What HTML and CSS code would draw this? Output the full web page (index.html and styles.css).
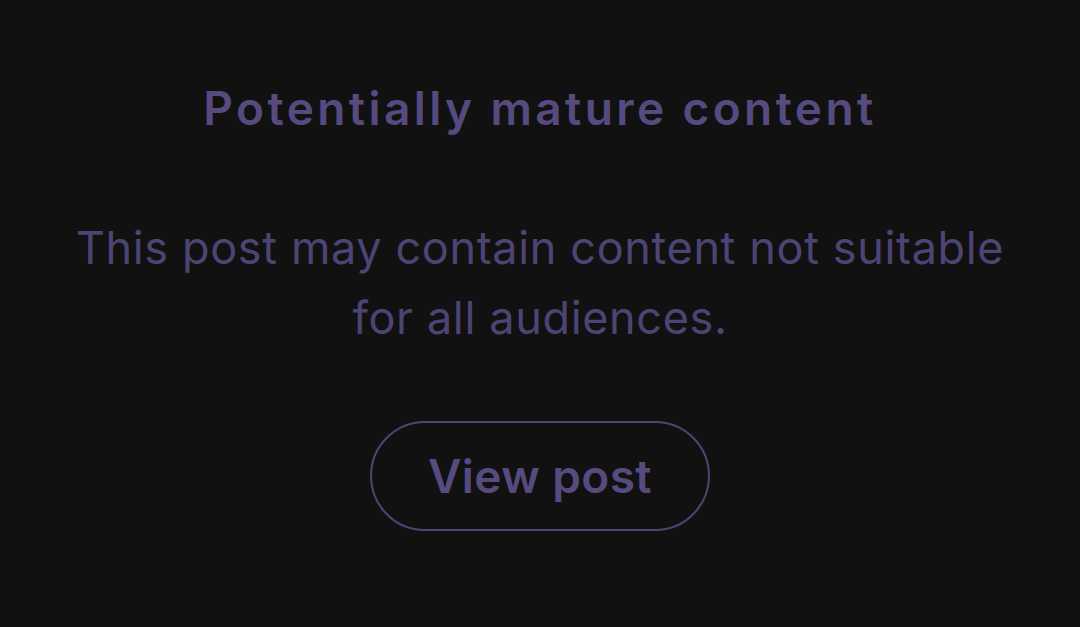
FILE: index.html
```html
<!DOCTYPE html>
<html lang="en">
  <head>
    <meta charset="UTF-8" />
    <meta name="viewport" content="width=device-width, initial-scale=1.0" />
    <title>Potentially mature content</title>
    <link rel="stylesheet" href="styles.css">
  </head>
  <body>
    <div class="notice">
      <h1 class="notice-title">Potentially mature content</h1>
      <p class="notice-text">This post may contain content not suitable for all audiences.</p>
      <button class="view-button">View post</button>
    </div>
  </body>
</html>
```

FILE: styles.css
```css
body {
  margin: 0;
  background-color: #121112;
  font-family: "Inter", "Noto Sans", sans-serif;
  color: #53487a;
}

.notice {
  display: flex;
  flex-direction: column;
  align-items: center;
  padding: 78px 40px 0;
  text-align: center;
}

.notice-title {
  margin: 0;
  font-size: 46px;
  font-weight: 600;
  line-height: 60px;
  letter-spacing: 3.4px;
  color: #574a7f;
}

.notice-text {
  margin: 75px 0 0;
  max-width: 950px;
  font-size: 45px;
  font-weight: 400;
  line-height: 70px;
  letter-spacing: 0.65px;
  color: #4e4474;
}

.view-button {
  margin-top: 68px;
  width: 340px;
  height: 110px;
  border: 2px solid #4e4474;
  border-radius: 55px;
  background: transparent;
  font-family: inherit;
  font-size: 46px;
  font-weight: 600;
  letter-spacing: 0.4px;
  color: #564a7e;
}
```
